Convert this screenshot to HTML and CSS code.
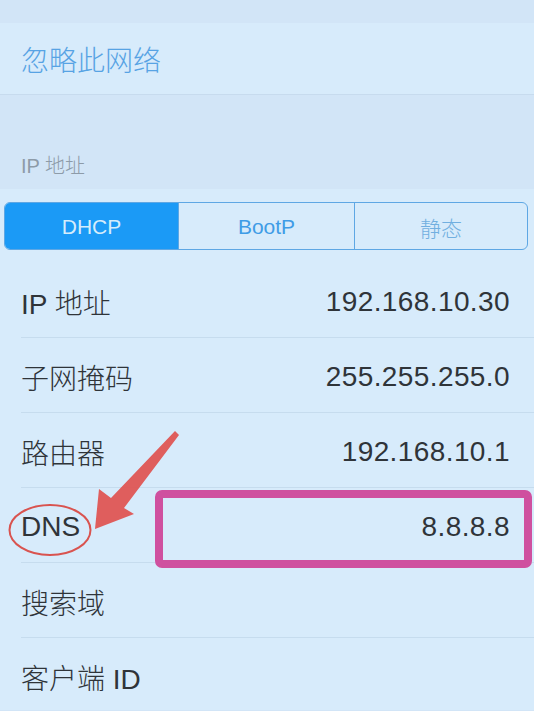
FILE: index.html
```html
<!DOCTYPE html>
<html lang="zh-CN">
<head>
<meta charset="utf-8">
<title>IP 地址</title>
<link rel="stylesheet" href="styles.css">
</head>
<body>
<div class="page">
  <div class="topband"></div>
  <div class="action-row"><span class="action">忽略此网络</span></div>
  <div class="section-header">IP 地址</div>
  <div class="group">
    <div class="segmented">
      <div class="seg active">DHCP</div>
      <div class="seg">BootP</div>
      <div class="seg muted">静态</div>
    </div>
    <div class="rows">
      <div class="row"><span class="label">IP 地址</span><span class="value">192.168.10.30</span></div>
      <div class="row"><span class="label">子网掩码</span><span class="value">255.255.255.0</span></div>
      <div class="row"><span class="label">路由器</span><span class="value">192.168.10.1</span></div>
      <div class="row"><span class="label">DNS</span><span class="value">8.8.8.8</span></div>
      <div class="row"><span class="label">搜索域</span><span class="value"></span></div>
      <div class="row last"><span class="label">客户端 ID</span><span class="value"></span></div>
    </div>
  </div>
  <svg class="annotations" width="534" height="711" viewBox="0 0 534 711" xmlns="http://www.w3.org/2000/svg">
    <rect x="159" y="494" width="369" height="70" rx="3" fill="none" stroke="#cf509f" stroke-width="8"/>
    <ellipse cx="50" cy="530" rx="40.5" ry="25" fill="none" stroke="#d9534f" stroke-width="2"/>
    <polygon points="95,529 99,489 111,498 175,431 179,435 124,508 134,514" fill="#e0514f" fill-opacity="0.92"/>
  </svg>
</div>
</body>
</html>
```

FILE: styles.css
```css
html, body {
  margin: 0;
  padding: 0;
}
body {
  background: #d2e5f7;
  font-family: "Liberation Sans", "Noto Sans CJK SC", sans-serif;
}
.page {
  position: relative;
  width: 534px;
  height: 711px;
  overflow: hidden;
  background: #d2e5f7;
}
.topband {
  height: 23px;
}
.action-row {
  height: 72px;
  background: #d7ebfb;
  border-bottom: 1px solid #c7dbee;
  display: flex;
  align-items: center;
  padding-left: 21px;
  padding-top: 1px;
  box-sizing: border-box;
}
.action {
  font-size: 28px;
  font-weight: 300;
  color: #57a3e4;
}
.section-header {
  height: 94px;
  box-sizing: border-box;
  display: flex;
  align-items: flex-end;
  padding-left: 21px;
  padding-bottom: 10px;
  font-size: 20px;
  font-weight: 300;
  color: #8d9ba8;
}
.group {
  background: #d7ebfb;
  padding-top: 13px;
  height: 521px;
  box-sizing: border-box;
}
.segmented {
  margin-left: 4px;
  width: 524px;
  height: 48px;
  box-sizing: border-box;
  border: 1px solid #5ea7e4;
  border-radius: 6px;
  display: grid;
  grid-template-columns: 173px 176px 1fr;
  overflow: hidden;
}
.seg {
  display: flex;
  align-items: center;
  justify-content: center;
  padding-top: 1px;
  font-size: 21px;
  font-weight: 300;
  color: #3f9ce6;
  border-left: 1px solid #5ea7e4;
}
.seg.active {
  background: #1b9af6;
  color: #d5ecfb;
  border-left: none;
}
.seg.muted {
  color: #71afe0;
}
.rows {
  margin-top: 13px;
}
.row {
  margin-left: 21px;
  padding-right: 24px;
  padding-top: 3px;
  height: 75px;
  box-sizing: border-box;
  border-bottom: 1px solid #c6dcee;
  display: flex;
  align-items: center;
  justify-content: space-between;
  font-size: 28px;
  font-weight: 300;
  color: #2f3439;
}
.value {
  letter-spacing: 0.4px;
}
.row.last {
  border-bottom: none;
}
.annotations {
  position: absolute;
  top: 0;
  left: 0;
  pointer-events: none;
}
```
